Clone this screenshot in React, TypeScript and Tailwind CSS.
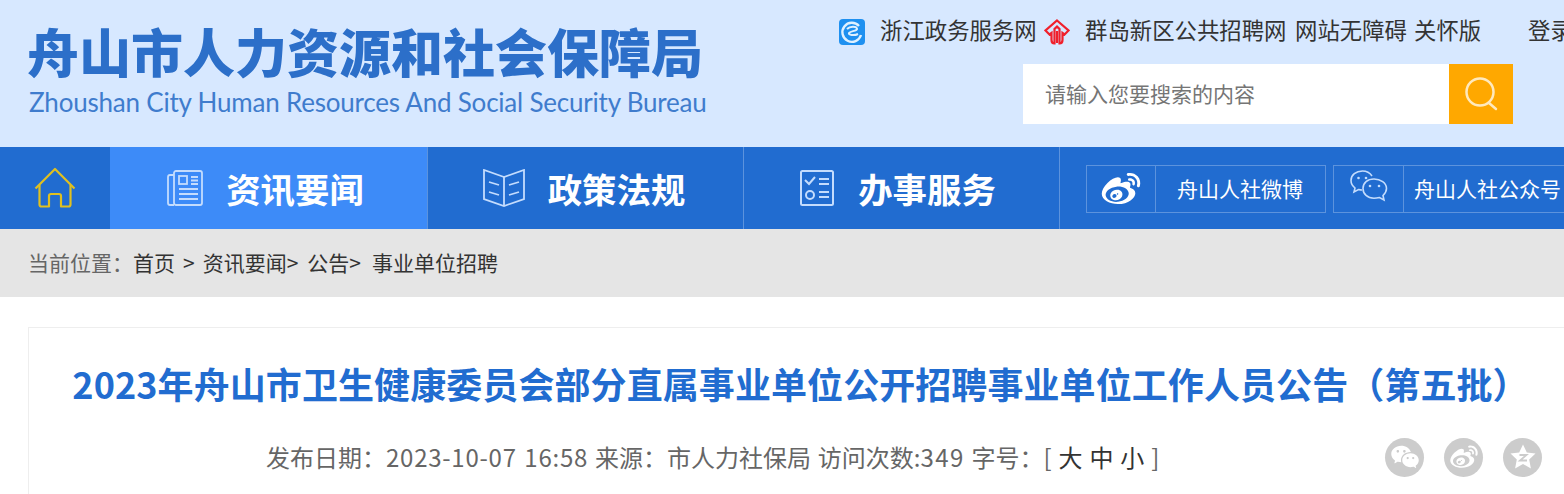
import React from "react";
import { RiWeiboFill, RiWechatFill } from "react-icons/ri";

const cjk = "font-['Noto_Sans_CJK_SC','Liberation_Sans',sans-serif]";

const ZhejiangIcon = () => (
  <svg className="shrink-0" width="26" height="26" viewBox="0 0 26 26" fill="none">
    <rect width="26" height="26" rx="4" fill="#1e90f0" />
    <path d="M20 7a9.500 9.500 0 1 0 2 9" stroke="#dff1ff" strokeWidth="2.4" />
    <path d="M8 10c3-3 9-3 10-.5S11 12 10 14s5 3 9 1" stroke="#dff1ff" strokeWidth="2" />
  </svg>
);

const RedIcon = () => (
  <svg className="shrink-0" width="26" height="26" viewBox="0 0 26 26" fill="none" stroke="#f0202c" strokeWidth="2.2">
    <path d="M13 1.500 24.500 11.500l-4 4-2-1.500v7q0 3.500-3 3.500V10L13 7.500 10.500 10v14.500q-3 0-3-3.500v-7l-2 1.500-4-4z" />
    <path d="M13 12v12" />
  </svg>
);

const SearchIcon = () => (
  <svg width="36" height="36" viewBox="0 0 36 36" fill="none" stroke="#ffe9bd" strokeWidth="2.5">
    <circle cx="17" cy="16" r="13.500" />
    <path d="M26 27l7 6" strokeLinecap="round" />
  </svg>
);

const HomeIcon = () => (
  <svg width="42" height="42" viewBox="0 0 42 42" fill="none" stroke="#e0c020" strokeWidth="2.200" strokeLinejoin="round">
    <path d="M1.500 21.500 21 2l19.500 19.500" />
    <path d="M5.500 18v19.500q0 2 2 2H15V29q0-2 2-2h8q2 0 2 2v10.500h7.500q2 0 2-2V18" />
  </svg>
);

const NewsIcon = () => (
  <svg width="36" height="36" viewBox="0 0 36 36" fill="none" stroke="#c4dcfd" strokeWidth="1.800">
    <path d="M7 35H3q-2 0-2-2V7q0-2 2-2h4" />
    <rect x="7" y="1" width="28" height="34" rx="2" />
    <rect x="12" y="6" width="8" height="8" />
    <path d="M24 7h7M24 10.500h7M24 14h7M12 19h19M12 24h19M12 29h19" />
  </svg>
);

const BookIcon = () => (
  <svg width="42" height="38" viewBox="0 0 42 38" fill="none" stroke="#c4dcfd" strokeWidth="1.800">
    <path d="M21 8 1 1v29l20 7 20-7V1z" />
    <path d="M21 8v29M6 13l10 3M6 23l10 3M26 16l10-3M26 26l10-3" />
  </svg>
);

const CheckIcon = () => (
  <svg width="34" height="36" viewBox="0 0 34 36" fill="none" stroke="#c4dcfd" strokeWidth="2">
    <rect x="1" y="1" width="32" height="34" rx="1.500" />
    <path d="m5 10 4 4 6-7M19 9h10M19 14h10M19 22h10M19 27h10" />
    <circle cx="10" cy="25" r="4" />
  </svg>
);

const WechatOutline = () => (
  <svg width="38" height="32" viewBox="0 0 38 32" fill="none" stroke="#c4dcfd" strokeWidth="1.600">
    <path d="M22 6C20 3 17 1 12.500 1 6 1 1 5 1 10.500c0 3 1.500 5.500 4 7.500l-1 4 4.500-2.500c1 .3 2 .5 3.500.5" />
    <path d="M24 9c6.500 0 12.500 4 12.500 9.500 0 3-1.500 5-3.500 7l1 4.500-4.500-2.500c-2 .5-3.500.8-5.500.8-6.500 0-11-4.300-11-9.800S17.500 9 24 9z" />
    <circle cx="8.500" cy="8" r="1.300" fill="#c4dcfd" stroke="none" />
    <circle cx="16" cy="8" r="1.300" fill="#c4dcfd" stroke="none" />
    <circle cx="20" cy="16" r="1.300" fill="#c4dcfd" stroke="none" />
    <circle cx="29" cy="16" r="1.300" fill="#c4dcfd" stroke="none" />
  </svg>
);

const QzoneIcon = () => (
  <svg width="28" height="28" viewBox="0 0 28 28">
    <path d="M14 1.500l3.800 8 8.700 1-6.300 6 1.700 9-7.900-4.500-7.900 4.500 1.700-9-6.300-6 8.700-1z" fill="#fff" />
    <path d="M10.500 12h7l-6.500 5.500h7" fill="none" stroke="#ccc" strokeWidth="1.800" />
  </svg>
);

const navItems = [
  { title: "资讯要闻", icon: <NewsIcon />, active: true, cls: "w-[318px] gap-[23px] pr-[6px]" },
  { title: "政策法规", icon: <BookIcon />, active: false, cls: "w-[316px] gap-[23px] pr-[3px]" },
  { title: "办事服务", icon: <CheckIcon />, active: false, cls: "w-[316px] gap-[24px] pr-[7px]" },
];

const shareIcons = [
  <RiWechatFill key="wechat" size={30} color="#fff" />,
  <RiWeiboFill key="weibo" size={30} color="#fff" />,
  <QzoneIcon key="qzone" />,
];

export default function App() {
  return (
    <div className={`h-[494px] w-[1564px] overflow-hidden bg-white ${cjk}`}>
      {/* HEADER */}
      <header className="flex h-[147px] justify-between bg-[#d7e8ff]">
        <div className="w-[780px] shrink-0 pl-[27px] pt-[20px]">
          <div className="h-[62px] text-[52px] leading-[62px] font-black whitespace-nowrap text-[#2c6fc9]">
            舟山市人力资源和社会保障局
          </div>
          <div className="mt-[5px] pl-[2px] font-['Lato',sans-serif] text-[26px] leading-[30px] tracking-[-0.21px] whitespace-nowrap text-[#3f7ccd]">
            Zhoushan City Human Resources And Social Security Bureau
          </div>
        </div>

        <div className="w-[725px] shrink-0 pt-[19px]">
          <div className="flex h-[26px] items-start whitespace-nowrap text-[22.4px] leading-[20px] text-[#333]">
            <ZhejiangIcon />
            <span className="ml-[15px] w-[164px] shrink-0">浙江政务服务网</span>
            <RedIcon />
            <span className="ml-[15px] w-[210px] shrink-0">群岛新区公共招聘网</span>
            <span className="w-[119px] shrink-0">网站无障碍</span>
            <span className="w-[114px] shrink-0">关怀版</span>
            <span className="shrink-0">登录</span>
          </div>
          <div className="mt-[19px] ml-[184px] flex h-[60px] w-[490px]">
            <div className="flex flex-1 items-center bg-white pl-[22px] text-[21px] text-[#757575]">
              请输入您要搜索的内容
            </div>
            <div className="flex w-[64px] items-center justify-center bg-[#ffa800]">
              <SearchIcon />
            </div>
          </div>
        </div>
      </header>

      {/* NAV */}
      <nav className="flex h-[82px] bg-[#216cd0] text-white">
        <div className="flex w-[110px] shrink-0 items-center justify-center">
          <HomeIcon />
        </div>
        {navItems.map((item) => (
          <div
            key={item.title}
            className={`flex ${item.cls} shrink-0 items-center justify-center border-r border-[#5c93dd] ${item.active ? "bg-[#3d8bf8]" : ""}`}
          >
            {item.icon}
            <span className="text-[34.4px] leading-none font-bold">{item.title}</span>
          </div>
        ))}
        <div className="mt-[2px] ml-[26px] flex shrink-0 items-center gap-[7px] whitespace-nowrap text-[21px]">
          <div className="flex h-[48px] w-[240px] shrink-0 items-center border border-[#5c93dd]">
            <div className="flex h-[46px] w-[69px] items-center justify-center border-r border-[#5c93dd]">
              <RiWeiboFill size={42} color="#fff" />
            </div>
            <span className="ml-[21px]">舟山人社微博</span>
          </div>
          <div className="flex h-[48px] w-[240px] shrink-0 items-center border border-[#5c93dd]">
            <div className="flex h-[46px] w-[70px] items-center justify-center border-r border-[#5c93dd] pb-[6px]">
              <WechatOutline />
            </div>
            <span className="ml-[10px]">舟山人社公众号</span>
          </div>
        </div>
      </nav>

      {/* BREADCRUMB */}
      <div className="flex h-[68px] items-center bg-[#e5e5e5] pl-[28px] text-[21px] whitespace-nowrap text-[#333]">
        <span className="text-[#666]">当前位置：</span>
        <span>首页</span>
        <span className="ml-[8px]">&gt;</span>
        <span className="ml-[8px]">资讯要闻&gt;</span>
        <span className="ml-[9px]">公告&gt;</span>
        <span className="ml-[11px]">事业单位招聘</span>
      </div>

      {/* ARTICLE */}
      <section className="mt-[30px] ml-[28px] h-[200px] w-[1544px] border-t border-l border-[#eeeeee]">
        <h1 className="mt-[30px] text-center text-[36px] leading-[50px] tracking-[0.08px] font-bold whitespace-nowrap text-[#216cd0]">
          2023年舟山市卫生健康委员会部分直属事业单位公开招聘事业单位工作人员公告（第五批）
        </h1>
        <div className="mt-[25px] flex h-[48px] items-center pl-[237px]">
          <div className="flex-1 text-[24px] [word-spacing:1.5px] whitespace-nowrap text-[#666]">
            发布日期：<span className="tracking-[0.75px]">2023-10-07 16:58</span> 来源：市人力社保局 访问次数:
            <span className="tracking-[1.4px]">349</span> 字号：[
            <span className="text-[#333]"> 大 中 小 </span>]
          </div>
          <div className="flex gap-[20px] pr-[30px]">
            {shareIcons.map((icon, i) => (
              <div key={i} className="flex h-[39px] w-[39px] items-center justify-center rounded-full bg-[#cccccc]">
                {icon}
              </div>
            ))}
          </div>
        </div>
      </section>
    </div>
  );
}
